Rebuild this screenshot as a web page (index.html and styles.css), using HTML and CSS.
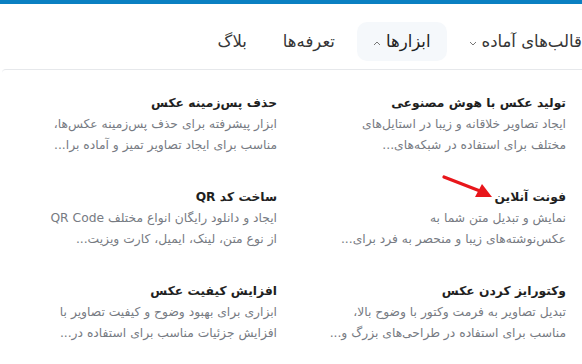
FILE: index.html
```
<!DOCTYPE html>
<html lang="fa" dir="rtl">
<head>
<meta charset="utf-8">
<link rel="stylesheet" href="styles.css">
</head>
<body>
<div class="topbar"></div>
<header class="header">
  <nav class="nav">
    <a class="nav-item">قالب‌های آماده<svg class="chev" viewBox="0 0 8 5" width="8" height="5"><path d="M1 1l3 3 3-3"/></svg></a>
    <a class="nav-item active">ابزارها<svg class="chev" viewBox="0 0 8 5" width="8" height="5"><path d="M1 4l3-3 3 3"/></svg></a>
    <a class="nav-item">تعرفه‌ها</a>
    <a class="nav-item">بلاگ</a>
  </nav>
</header>
<section class="panel">
  <div class="grid">
    <div class="tool">
      <h3 class="tool-title">تولید عکس با هوش مصنوعی</h3>
      <p class="tool-desc"><span>ایجاد تصاویر خلاقانه و زیبا در استایل‌های</span><span>مختلف برای استفاده در شبکه‌های...</span></p>
    </div>
    <div class="tool">
      <h3 class="tool-title">حذف پس‌زمینه عکس</h3>
      <p class="tool-desc"><span>ابزار پیشرفته برای حذف پس‌زمینه عکس‌ها،</span><span>مناسب برای ایجاد تصاویر تمیز و آماده برا...</span></p>
    </div>
    <div class="tool">
      <h3 class="tool-title">فونت آنلاین</h3>
      <p class="tool-desc"><span>نمایش و تبدیل متن شما به</span><span>عکس‌نوشته‌های زیبا و منحصر به فرد برای...</span></p>
    </div>
    <div class="tool">
      <h3 class="tool-title">ساخت کد QR</h3>
      <p class="tool-desc"><span>ایجاد و دانلود رایگان انواع مختلف QR Code</span><span>از نوع متن، لینک، ایمیل، کارت ویزیت...</span></p>
    </div>
    <div class="tool">
      <h3 class="tool-title">وکتورایز کردن عکس</h3>
      <p class="tool-desc"><span>تبدیل تصاویر به فرمت وکتور با وضوح بالا،</span><span>مناسب برای استفاده در طراحی‌های بزرگ و...</span></p>
    </div>
    <div class="tool">
      <h3 class="tool-title">افزایش کیفیت عکس</h3>
      <p class="tool-desc"><span>ابزاری برای بهبود وضوح و کیفیت تصاویر با</span><span>افزایش جزئیات مناسب برای استفاده در...</span></p>
    </div>
  </div>
  <svg class="annot-arrow" viewBox="0 0 52 26" width="52" height="26"><path d="M2 3L38 17" stroke="#e8161b" stroke-width="3.2" stroke-linecap="round"/><path d="M50 23L33 23L40 10Z" fill="#e8161b"/></svg>
</section>
</body>
</html>
```
FILE: styles.css
```
* { box-sizing: border-box; }
html, body { margin: 0; padding: 0; background: #fff; }
body {
  font-family: "DejaVu Sans", "Noto Sans", sans-serif;
  width: 582px;
  height: 364px;
  overflow: hidden;
}
.topbar { height: 4px; background: #0a80c2; }
.header { height: 65px; display: flex; align-items: center; padding-top: 16px; padding-bottom: 6px; }
.nav { display: flex; gap: 8px; margin-right: -14px; }
.nav-item {
  display: flex; align-items: center; gap: 5px;
  height: 39px; padding: 0 14px;
  font-size: 16.5px; color: #363636;
  border-radius: 10px;
}
.nav-item.active { background: #f5f8fb; color: #222; padding: 0 16px; }
.chev { fill: none; stroke: #777; stroke-width: 1; margin-top: 3px; }
.panel {
  position: relative;
  margin-left: 2px;
  border-top: 1px solid #e6e8eb;
  border-top-left-radius: 4px;
  padding: 22px 16px 0 10px;
}
.grid { display: grid; grid-template-columns: 1fr 1fr; column-gap: 24px; row-gap: 30px; }
.tool-title { margin: 0; font-size: 12.3px; font-weight: 700; color: #1f1f1f; line-height: 22px; }
.tool-desc { margin: 0; font-size: 12.3px; color: #777b83; line-height: 21px; }
.tool-desc span { display: block; white-space: nowrap; }
.annot-arrow { position: absolute; left: 440px; top: 104px; }
```
